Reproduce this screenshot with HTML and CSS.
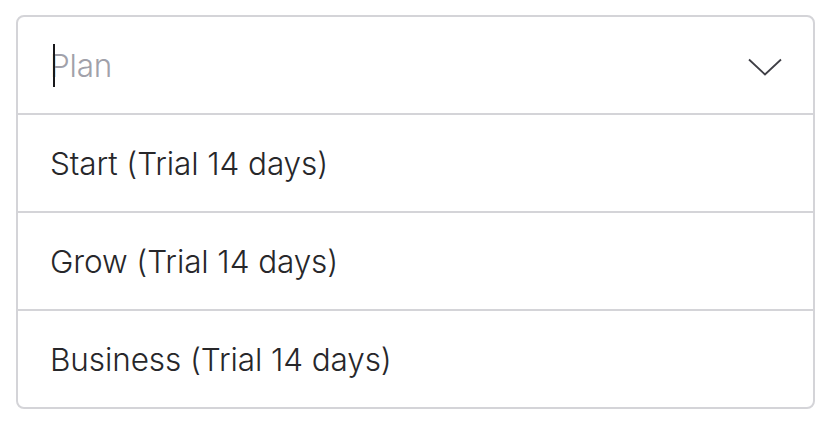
FILE: index.html
```html
<!DOCTYPE html>
<html>
<head>
<meta charset="utf-8">
<link rel="stylesheet" href="styles.css">
</head>
<body>
<div class="page">
  <div class="select">
    <div class="select-head">
      <div class="field">
        <span class="caret"></span>
        <span class="placeholder">Plan</span>
      </div>
      <svg class="chevron" width="34" height="18" viewBox="0 0 34 18" aria-hidden="true">
        <path d="M1 1.5 L17 16.5 L33 1.5" fill="none" stroke="#3f3f46" stroke-width="1.8"/>
      </svg>
    </div>
    <div class="option">Start (Trial 14 days)</div>
    <div class="option">Grow (Trial 14 days)</div>
    <div class="option">Business (Trial 14 days)</div>
  </div>
</div>
</body>
</html>
```
FILE: styles.css
```css
html, body {
  margin: 0;
  padding: 0;
  background: #ffffff;
}
.page {
  padding: 15px 13px 0 16px;
  font-family: Inter, "Noto Sans", sans-serif;
  font-weight: 300;
}
.select {
  width: 795px;
  border: 2px solid #d4d4d8;
  border-radius: 8px;
  overflow: hidden;
}
.select-head {
  height: 96px;
  display: flex;
  align-items: center;
  justify-content: space-between;
  padding: 0 31px 0 32px;
  border-bottom: 2px solid #d4d4d8;
}
.field {
  position: relative;
  display: flex;
  align-items: center;
}
.caret {
  position: absolute;
  left: 3px;
  top: -3px;
  width: 2px;
  height: 43px;
  background: #18181b;
}
.placeholder {
  font-size: 31.5px;
  color: #a1a1aa;
  line-height: 37px;
  letter-spacing: -0.2px;
}
.chevron {
  display: block;
  margin-top: 3px;
}
.option {
  height: 96px;
  display: flex;
  align-items: center;
  padding: 0 32px;
  font-size: 31.5px;
  color: #27272a;
  letter-spacing: -0.1px;
  border-bottom: 2px solid #d4d4d8;
}
.option:last-child {
  border-bottom: none;
}
```
